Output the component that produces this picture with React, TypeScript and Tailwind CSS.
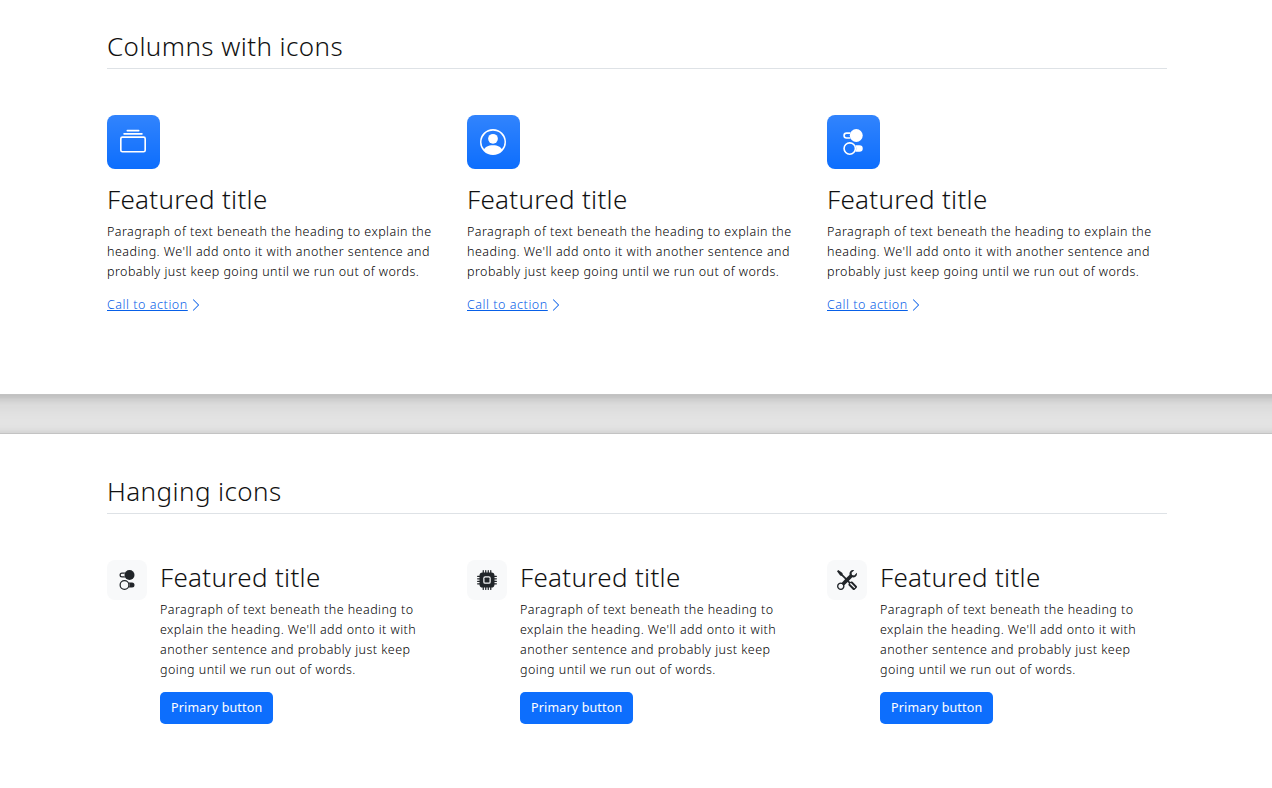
const FONT = "font-['Noto_Sans','Liberation_Sans',sans-serif]";

function Collection() {
  return (
    <svg viewBox="0 0 16 16" fill="currentColor" className="h-[26px] w-[26px]">
      <path d="M2.5 3.5a.5.5 0 0 1 0-1h11a.5.5 0 0 1 0 1h-11zm2-2a.5.5 0 0 1 0-1h7a.5.5 0 0 1 0 1h-7zM0 13a1.5 1.5 0 0 0 1.5 1.5h13A1.5 1.5 0 0 0 16 13V6a1.5 1.5 0 0 0-1.5-1.5h-13A1.5 1.5 0 0 0 0 6v7zm1.5.5A.5.5 0 0 1 1 13V6a.5.5 0 0 1 .5-.5h13a.5.5 0 0 1 .5.5v7a.5.5 0 0 1-.5.5h-13z" />
    </svg>
  );
}

function PeopleCircle() {
  return (
    <svg viewBox="0 0 16 16" fill="currentColor" className="h-[26px] w-[26px]">
      <path d="M11 6a3 3 0 1 1-6 0 3 3 0 0 1 6 0z" />
      <path
        fillRule="evenodd"
        d="M0 8a8 8 0 1 1 16 0A8 8 0 0 1 0 8zm8-7a7 7 0 0 0-5.468 11.37C3.242 11.226 4.805 10 8 10s4.757 1.225 5.468 2.37A7 7 0 0 0 8 1z"
      />
    </svg>
  );
}

function Toggles({ className }: { className: string }) {
  return (
    <svg viewBox="0 0 16 16" fill="currentColor" className={className}>
      <path d="M9.465 10H12a2 2 0 1 1 0 4H9.465c.34-.588.535-1.271.535-2 0-.729-.195-1.412-.535-2z" />
      <path d="M6 15a3 3 0 1 0 0-6 3 3 0 0 0 0 6zm0 1a4 4 0 1 1 0-8 4 4 0 0 1 0 8zm.535-10a3.975 3.975 0 0 1-.409-1H4a1 1 0 0 1 0-2h2.126c.091-.355.23-.69.41-1H4a2 2 0 1 0 0 4h2.535z" />
      <path d="M14 4a4 4 0 1 1-8 0 4 4 0 0 1 8 0z" />
    </svg>
  );
}

function Cpu({ className }: { className: string }) {
  return (
    <svg viewBox="0 0 16 16" fill="currentColor" className={className}>
      <path d="M6.5 6a.5.5 0 0 0-.5.5v3a.5.5 0 0 0 .5.5h3a.5.5 0 0 0 .5-.5v-3a.5.5 0 0 0-.5-.5h-3z" />
      <path d="M5.5.5a.5.5 0 0 0-1 0V2A2.5 2.5 0 0 0 2 4.5H.5a.5.5 0 0 0 0 1H2v1H.5a.5.5 0 0 0 0 1H2v1H.5a.5.5 0 0 0 0 1H2v1H.5a.5.5 0 0 0 0 1H2A2.5 2.5 0 0 0 4.5 14v1.5a.5.5 0 0 0 1 0V14h1v1.5a.5.5 0 0 0 1 0V14h1v1.5a.5.5 0 0 0 1 0V14h1v1.5a.5.5 0 0 0 1 0V14a2.5 2.5 0 0 0 2.5-2.5h1.5a.5.5 0 0 0 0-1H14v-1h1.5a.5.5 0 0 0 0-1H14v-1h1.5a.5.5 0 0 0 0-1H14v-1h1.5a.5.5 0 0 0 0-1H14A2.5 2.5 0 0 0 11.5 2V.5a.5.5 0 0 0-1 0V2h-1V.5a.5.5 0 0 0-1 0V2h-1V.5a.5.5 0 0 0-1 0V2h-1V.5zm1 4.5h3A1.5 1.5 0 0 1 11 6.5v3A1.5 1.5 0 0 1 9.5 11h-3A1.5 1.5 0 0 1 5 9.5v-3A1.5 1.5 0 0 1 6.5 5z" />
    </svg>
  );
}

function Tools({ className }: { className: string }) {
  return (
    <svg viewBox="0 0 16 16" fill="currentColor" className={className}>
      <path d="M1 0 0 1l2.2 3.081a1 1 0 0 0 .815.419h.07a1 1 0 0 1 .708.293l2.675 2.675-2.617 2.654A3.003 3.003 0 0 0 0 13a3 3 0 1 0 5.878-.851l2.654-2.617.968.968-.305.914a1 1 0 0 0 .242 1.023l3.27 3.27a.997.997 0 0 0 1.414 0l1.586-1.586a.997.997 0 0 0 0-1.414l-3.27-3.27a1 1 0 0 0-1.023-.242L10.5 9.5l-.96-.96 2.68-2.643A3.005 3.005 0 0 0 16 3c0-.269-.035-.53-.102-.777l-2.14 2.141L12 4l-.364-1.757L13.777.102a3 3 0 0 0-3.675 3.68L7.462 6.46 4.793 3.793a1 1 0 0 1-.293-.707v-.071a1 1 0 0 0-.419-.814L1 0Zm9.646 10.646a.5.5 0 0 1 .708 0l2.914 2.915a.5.5 0 0 1-.707.707l-2.915-2.914a.5.5 0 0 1 0-.708ZM3 11l.471.242.529.026.287.445.445.287.026.529L5 13l-.242.471-.026.529-.445.287-.287.445-.529.026L3 15l-.471-.242L2 14.732l-.287-.445L1.268 14l-.026-.529L1 13l.242-.471.026-.529.445-.287.287-.445.529-.026L3 11Z" />
    </svg>
  );
}

function Chevron() {
  return (
    <svg viewBox="0 0 16 16" fill="currentColor" className="h-3.5 w-3.5">
      <path
        fillRule="evenodd"
        d="M4.646 1.646a.5.5 0 0 1 .708 0l6 6a.5.5 0 0 1 0 .708l-6 6a.5.5 0 0 1-.708-.708L10.293 8 4.646 2.354a.5.5 0 0 1 0-.708z"
      />
    </svg>
  );
}

const copy =
  "Paragraph of text beneath the heading to explain the heading. We'll add onto it with another sentence and probably just keep going until we run out of words.";

function Feature({ icon }: { icon: React.ReactNode }) {
  return (
    <div className="w-[336px]">
      <div className="flex h-[54px] w-[53px] items-center rounded-lg bg-[#0d6efd] bg-gradient-to-b from-white/15 to-white/0 pl-[13px] text-white">
        {icon}
      </div>
      <h3 className="mt-[13px] text-[26px] leading-[34px] font-light tracking-[0.3px] text-[#111]">Featured title</h3>
      <p className="mt-[6px] text-[12.5px] leading-[20px] font-light tracking-[0.46px] text-black">{copy}</p>
      <a
        href="#"
        className="mt-[13px] flex items-center gap-[1px] text-[12.5px] leading-[20px] font-light tracking-[0.55px] text-[#0860e8]"
      >
        <span className="underline">Call to action</span>
        <Chevron />
      </a>
    </div>
  );
}

function Hanging({ icon }: { icon: React.ReactNode }) {
  return (
    <div className="flex w-[336px] gap-[13px]">
      <div className="flex h-10 w-10 shrink-0 items-center justify-center rounded-lg bg-[#f8f9fa] text-[#212529]">
        {icon}
      </div>
      <div className="w-[270px]">
        <h3 className="-mt-[1px] text-[26px] leading-[36px] font-light tracking-[0.3px] text-[#111]">Featured title</h3>
        <p className="mt-[5px] text-[12.5px] leading-[20px] font-light tracking-[0.46px] text-black">{copy}</p>
        <a
          href="#"
          className="mt-[12px] inline-flex h-8 items-center rounded-[5px] bg-[#0d6efd] px-[11px] text-[12.5px] tracking-[0.15px] text-white"
        >
          Primary button
        </a>
      </div>
    </div>
  );
}

export default function App() {
  return (
    <div className={`min-h-[788px] bg-white text-[#212529] ${FONT}`}>
      <section className="ml-[107px] h-[394px] w-[1060px] pt-[26px]">
        <h2 className="border-b border-[#dee2e6] pb-[1px] text-[26px] leading-[41px] font-light tracking-[0.42px] text-[#111]">
          Columns with icons
        </h2>
        <div className="mt-[46px] flex gap-6">
          <Feature icon={<Collection />} />
          <Feature icon={<PeopleCircle />} />
          <Feature icon={<Toggles className="h-[26px] w-[26px]" />} />
        </div>
      </section>
      <div className="h-10 overflow-hidden">
        <div className="-mx-10 h-full border-y border-black/15 bg-black/10 shadow-[inset_0_0.5em_1.5em_rgba(0,0,0,0.1),inset_0_0.125em_0.5em_rgba(0,0,0,0.15)]" />
      </div>
      <section className="ml-[107px] w-[1060px] pt-[37px]">
        <h2 className="border-b border-[#dee2e6] pb-[1px] text-[26px] leading-[41px] font-light tracking-[0.42px] text-[#111]">
          Hanging icons
        </h2>
        <div className="mt-[46px] flex gap-6">
          <Hanging icon={<Toggles className="h-5 w-5" />} />
          <Hanging icon={<Cpu className="h-5 w-5" />} />
          <Hanging icon={<Tools className="h-5 w-5" />} />
        </div>
      </section>
    </div>
  );
}
